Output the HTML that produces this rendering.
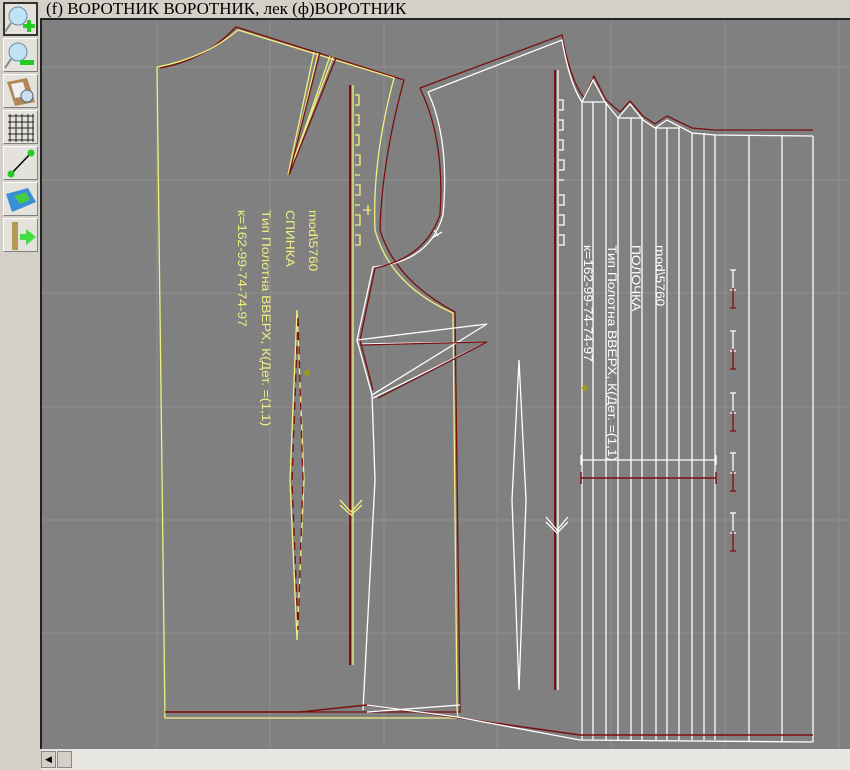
<!DOCTYPE html>
<html><head><meta charset="utf-8"><style>
body{margin:0;width:850px;height:770px;overflow:hidden;background:#d4d0c8;font-family:"Liberation Serif",serif;position:relative}
#title{position:absolute;left:46px;top:-1px;font-size:17px;color:#000;white-space:nowrap}
.btn{position:absolute;left:3px;width:35px;height:34px;background:#e4e2dc;border:1px solid #fff;border-right-color:#808080;border-bottom-color:#808080;box-sizing:border-box}
#canvas{position:absolute;left:40px;top:18px;width:810px;height:731px;background:#808080;border-left:2px solid #222;border-top:2px solid #222;box-sizing:border-box}
#sb{position:absolute;left:41px;top:749px;width:809px;height:21px;background:#e8e6e0}
</style></head><body>
<div id="title">(f) ВОРОТНИК ВОРОТНИК, лек (ф)ВОРОТНИК</div>
<div class="btn" style="top:2px;border:2px solid #333"></div>
<div class="btn" style="top:38px"></div>
<div class="btn" style="top:74px"></div>
<div class="btn" style="top:110px"></div>
<div class="btn" style="top:146px"></div>
<div class="btn" style="top:182px"></div>
<div class="btn" style="top:218px"></div>
<svg style="position:absolute;left:0;top:0" width="40" height="260">
<circle cx="18" cy="16" r="9" fill="#bfe3f5" stroke="#6a8aa0"/><line x1="11" y1="23" x2="5" y2="32" stroke="#888" stroke-width="2"/><path d="M27 20h4v4h4v4h-4v4h-4v-4h-4v-4h4z" fill="#2c2"/>
<circle cx="18" cy="52" r="9" fill="#bfe3f5" stroke="#6a8aa0"/><line x1="11" y1="59" x2="5" y2="68" stroke="#888" stroke-width="2"/><rect x="20" y="60" width="14" height="5" fill="#2c2"/>
<path d="M7 82l20-4 8 24-20 4z" fill="#b08858"/><path d="M11 84l12-2 4 14-12 2z" fill="#eee"/><circle cx="27" cy="96" r="6" fill="#cde" stroke="#567"/>
<g stroke="#222" stroke-width="1"><path d="M8 116h26M8 122h26M8 128h26M8 134h26M8 140h26M10 114v28M16 114v28M22 114v28M28 114v28M33 114v28"/></g>
<line x1="11" y1="174" x2="31" y2="153" stroke="#000" stroke-width="1.5"/><circle cx="11" cy="174" r="3.5" fill="#2c2"/><circle cx="31" cy="153" r="3.5" fill="#2c2"/>
<path d="M6 194l22-6 8 14-24 10z" fill="#3a8ed8"/><path d="M14 196l12-4 4 8-10 4z" fill="#4c4"/>
<path d="M12 222h6v28h-6z" fill="#b89858"/><path d="M20 234h6v-5l10 8-10 8v-5h-6z" fill="#4d4"/>
</svg>
<div id="canvas"></div>
<svg style="position:absolute;left:0;top:0" width="850" height="770">
<g stroke="#999" stroke-width="1" opacity="0.6">
<path d="M157 20v728M270 20v728M384 20v728M497 20v728M611 20v728M725 20v728M839 20v728M42 67h808M42 180h808M42 293h808M42 407h808M42 520h808M42 633h808"/>
</g>
<g fill="none" stroke-width="1.3">
<path d="M160 68 Q205 60 236 27 L404 80 Q382 160 380 230 Q395 280 455 312 L460 712 L165 712" stroke="#7a0f0f"/>
<path d="M157 67 Q205 58 238 30 L394 78 Q372 160 375 230 Q390 285 453 313 L457 710 L458 718 L165 718 L157 67" stroke="#f0f080"/>
<path d="M314 52 L288 175 L333 57 M318 53 L290 172 L330 56" stroke="#f0f080"/>
<path d="M320 52 L289 175 L336 58" stroke="#7a0f0f"/>
<path d="M297 310 L290 480 L297 640 L304 480 Z" stroke="#f0f080"/>
<path d="M298 318 L292 480 L298 630 L303 480 Z" stroke="#7a0f0f" stroke-dasharray="8 6"/>
<path d="M350 85 V665" stroke="#7a0f0f" stroke-width="2"/><path d="M353 85 V665" stroke="#f0f080"/>
<path d="M355 95h4v10h-4M355 115h4v10h-4M355 135h4v10h-4M355 155h5v10h-5M355 175h5M355 185h5v10h-5M355 205h5M355 215h5v10h-5M355 235h5v10h-5M363 210h8M368 205v10" stroke="#f0f080"/>
<path d="M340 500 L351 512 L362 500 M340 505 L351 515 L362 505" stroke="#f0f080"/>
<path d="M555 70 V690" stroke="#7a0f0f" stroke-width="2"/><path d="M558 70 V690" stroke="#fff"/>
<path d="M559 100h4v10h-4M559 120h4v10h-4M559 140h4v10h-4M559 160h5v10h-5M559 180h5M559 195h5v10h-5M559 215h5v10h-5M559 235h5v10h-5" stroke="#fff"/>
<path d="M546 517 L557 530 L568 517 M546 522 L557 533 L568 522" stroke="#fff"/>
<path d="M420 88 L562 35 Q570 80 584 98 L594 76 L606 100 L620 112 L630 101 L643 116 L655 124 L667 116 L692 128 L715 130 L813 130" stroke="#7a0f0f"/>
<path d="M428 92 L562 40 Q570 85 582 102 L593 80 L605 102 L618 118 L630 104 L643 120 L655 128 L667 120 L692 133 L715 135 L813 136" stroke="#fff"/>
<path d="M582 102 H605 M618 118 H643 M655 128 H680" stroke="#fff"/>
<path d="M428 92 Q450 140 443 215 Q430 262 373 267 L357 340 L372 395 L375 480 L363 710" stroke="#fff"/>
<path d="M420 88 Q445 140 440 215 Q425 258 375 268 L360 340 L373 390" stroke="#7a0f0f"/>
<path d="M434 230 L438 236 M432 238 L442 232" stroke="#fff"/>
<path d="M357 340 L487 324 L372 395 M362 344 L487 342 L373 398" stroke="#fff"/>
<path d="M360 345 L487 342 L378 398" stroke="#7a0f0f"/>
<path d="M519 360 L512 500 L519 690 L526 500 Z" stroke="#fff"/>
<path d="M582 102V740M593 102V740M606 102V740M618 118V740M631 118V740M642 118V740M656 128V740M667 128V740M679 128V740M692 133V740M704 133V740M715 135V740M749 136V742M782 136V742M813 136V742" stroke="#fff"/>
<path d="M581 460H716M581 455v10M716 455v10" stroke="#fff"/>
<path d="M581 478H716M581 472v12M716 472v12" stroke="#7a0f0f" stroke-width="1.5"/>
<path d="M165 712 L300 712 L367 705 L580 735 L813 735" stroke="#7a0f0f" stroke-width="1.5"/>
<path d="M367 712 L460 705 M367 705 L457 717 L580 740 L813 742" stroke="#fff"/>
</g>
<g stroke-width="1.3">
<path d="M733 270v20M730 270h6M730 290h6M733 331v20M730 331h6M730 351h6M733 393v20M730 393h6M730 413h6M733 453v20M730 453h6M730 473h6M733 513v20M730 513h6M730 533h6" stroke="#fff"/>
<path d="M733 288v20M730 308h6M733 349v20M730 369h6M733 411v20M730 431h6M733 471v20M730 491h6M733 531v20M730 551h6" stroke="#7a0f0f"/>
</g>
<circle cx="307" cy="373" r="3" fill="#9a9a20"/><circle cx="585" cy="388" r="3" fill="#9a9a20"/>
<g font-family="Liberation Sans Narrow, Liberation Sans, sans-serif" font-size="12">
<text transform="translate(309,210) rotate(90) scale(1.15,1)" fill="#f0f080">mod\5760</text>
<text transform="translate(286,210) rotate(90) scale(1.15,1)" fill="#f0f080">СПИНКА</text>
<text transform="translate(262,210) rotate(90) scale(1.15,1)" fill="#f0f080">Тип Полотна ВВЕРХ, К(Дет. =(1,1)</text>
<text transform="translate(238,210) rotate(90) scale(1.15,1)" fill="#f0f080">к=162-99-74-74-97</text>
<text transform="translate(656,245) rotate(90) scale(1.15,1)" fill="#fff">mod\5760</text>
<text transform="translate(632,245) rotate(90) scale(1.15,1)" fill="#fff">ПОЛОЧКА</text>
<text transform="translate(608,245) rotate(90) scale(1.15,1)" fill="#fff">Тип Полотна ВВЕРХ, К(Дет. =(1,1)</text>
<text transform="translate(584,245) rotate(90) scale(1.15,1)" fill="#fff">к=162-99-74-74-97</text>
</g>
</svg>
<div id="sb"></div>
<div style="position:absolute;left:41px;top:751px;width:15px;height:17px;background:#d4d0c8;border:1px solid #888;box-sizing:border-box;font-size:9px;line-height:15px;text-align:center">◀</div>
<div style="position:absolute;left:57px;top:751px;width:15px;height:17px;background:#d4d0c8;border:1px solid #888;box-sizing:border-box"></div>
</body></html>
